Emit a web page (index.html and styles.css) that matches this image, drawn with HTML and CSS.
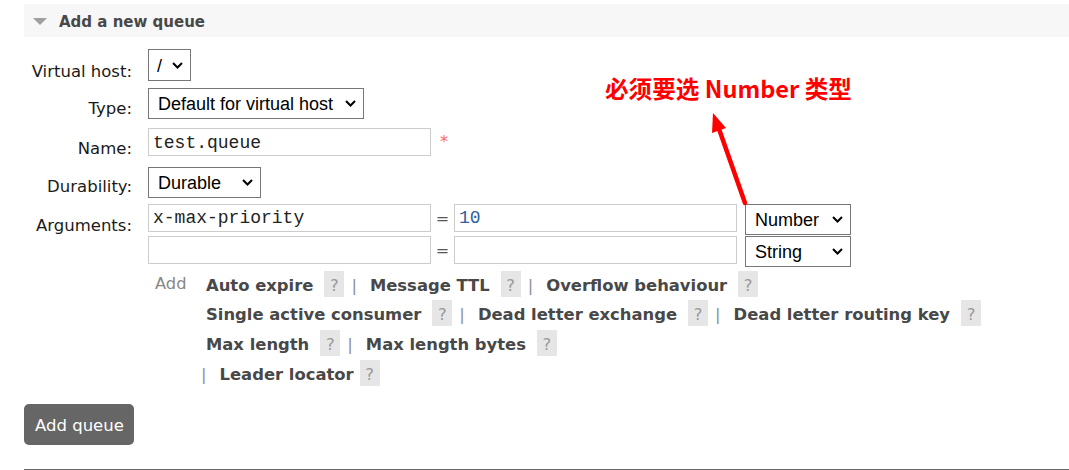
FILE: index.html
```html
<!DOCTYPE html>
<html lang="en">
<head>
<meta charset="utf-8">
<title>Add a new queue</title>
<link rel="stylesheet" href="styles.css">
</head>
<body>
<div class="page">
  <div class="section-head"><span class="tri"></span><h2>Add a new queue</h2></div>
  <form class="form">
    <div class="row r-vhost">
      <label class="lbl lbl-low">Virtual host:</label>
      <select class="sel sel-vhost"><option>/</option></select>
    </div>
    <div class="row r-type">
      <label class="lbl">Type:</label>
      <select class="sel sel-type"><option>Default for virtual host</option></select>
    </div>
    <div class="row r-name">
      <label class="lbl">Name:</label>
      <input class="txt" type="text" value="test.queue"><span class="req">*</span>
    </div>
    <div class="row r-dur">
      <label class="lbl">Durability:</label>
      <select class="sel sel-dur"><option>Durable</option></select>
    </div>
    <div class="row r-args">
      <label class="lbl lbl-low">Arguments:</label>
      <div class="args">
        <div class="arg-line">
          <input class="txt" type="text" value="x-max-priority"><span class="eq">=</span><input class="txt val" type="text" value="10"><select class="sel sel-argtype"><option>Number</option></select>
        </div>
        <div class="arg-line">
          <input class="txt" type="text" value=""><span class="eq">=</span><input class="txt val" type="text" value=""><select class="sel sel-argtype"><option>String</option></select>
        </div>
        <div class="add-area">
          <span class="add-lbl">Add</span>
          <div class="links">
            <div class="lrow"><span class="lk">Auto expire</span><span class="hlp">?</span><span class="sep">|</span><span class="lk">Message TTL</span><span class="hlp">?</span><span class="sep">|</span><span class="lk">Overflow behaviour</span><span class="hlp">?</span></div>
            <div class="lrow"><span class="lk">Single active consumer</span><span class="hlp">?</span><span class="sep">|</span><span class="lk">Dead letter exchange</span><span class="hlp">?</span><span class="sep">|</span><span class="lk">Dead letter routing key</span><span class="hlp">?</span></div>
            <div class="lrow"><span class="lk">Max length</span><span class="hlp">?</span><span class="sep">|</span><span class="lk">Max length bytes</span><span class="hlp">?</span></div>
            <div class="lrow lrow-last"><span class="sep">|</span><span class="lk">Leader locator</span><span class="hlp">?</span></div>
          </div>
        </div>
      </div>
    </div>
    <button type="button" class="btn">Add queue</button>
  </form>
  <hr class="rule">
  <div class="note">必须要选 Number 类型</div>
  <svg class="arrow" width="1069" height="470" viewBox="0 0 1069 470" aria-hidden="true">
    <line x1="745" y1="203" x2="719" y2="129" stroke="#ff0000" stroke-width="4.5" stroke-linecap="round"/>
    <polygon points="713,113 726,128 712,133" fill="#ff0000"/>
  </svg>
</div>
</body>
</html>
```
FILE: styles.css
```css
html, body {
  margin: 0;
  background: #fff;
}
body {
  font-family: "DejaVu Sans", Verdana, sans-serif;
  color: #1a1a1a;
}
.page {
  position: relative;
  box-sizing: border-box;
  width: 1069px;
  height: 470px;
  padding: 4px 0 0 24px;
  overflow: hidden;
}
.section-head {
  display: flex;
  align-items: center;
  height: 33px;
  background: #f7f7f7;
  padding-left: 9px;
}
.tri {
  width: 0;
  height: 0;
  border-left: 7px solid transparent;
  border-right: 7px solid transparent;
  border-top: 7px solid #a0a0a0;
  margin-right: 12px;
  margin-top: 1px;
}
.section-head h2 {
  margin: 0;
  font-size: 15px;
  font-weight: bold;
  color: #484848;
  line-height: 30px;
  padding-top: 3px;
}
.form {
  display: flex;
  flex-direction: column;
  align-items: flex-start;
  margin: 0;
}
.row {
  display: flex;
  align-items: flex-start;
}
.r-vhost { margin-top: 12px; }
.r-type { margin-top: 7px; }
.r-name { margin-top: 9px; }
.r-dur { margin-top: 10px; }
.r-args { margin-top: 6px; }
.lbl {
  width: 108px;
  margin-right: 16px;
  text-align: right;
  font-size: 16.5px;
  line-height: 17px;
  padding-top: 11.5px;
  color: #1a1a1a;
}
.lbl-low { padding-top: 13.5px; }
.sel {
  -webkit-appearance: none;
  appearance: none;
  box-sizing: border-box;
  height: 31px;
  margin: 0;
  border: 1px solid #767676;
  border-radius: 0;
  background: #fff url("data:image/svg+xml;utf8,<svg xmlns='http://www.w3.org/2000/svg' width='11' height='7' viewBox='0 0 11 7'><path d='M1 1l4.5 4.5L10 1' fill='none' stroke='%23000' stroke-width='2'/></svg>") no-repeat right 7px center;
  font: 18px "Liberation Sans", Arial, sans-serif;
  color: #000;
  padding: 1px 20px 0 9px;
}
.sel-vhost { width: 43px; height: 32px; padding-left: 8px; }
.sel-type { width: 216px; }
.sel-dur { width: 113px; }
.sel-argtype { width: 106px; margin-left: 8px; }
.txt {
  box-sizing: border-box;
  width: 283px;
  height: 28px;
  margin: 0;
  border: 1px solid #cccccc;
  border-radius: 0;
  padding: 1px 4px 0;
  font: 18px "Liberation Mono", "Courier New", monospace;
  color: #222;
  background: #fff;
  outline: none;
}
.val { color: #2c5f9e; }
.req {
  margin-left: 9px;
  color: #f66;
  font-size: 16px;
  line-height: 28px;
}
.eq {
  width: 23px;
  text-align: center;
  font-size: 16px;
  line-height: 29px;
  color: #555;
}
.args {
  display: flex;
  flex-direction: column;
  gap: 1px;
}
.arg-line {
  display: flex;
  align-items: flex-start;
}
.add-area {
  display: flex;
  align-items: flex-start;
  margin-top: 3px;
}
.add-lbl {
  box-sizing: border-box;
  width: 58px;
  padding-left: 7px;
  padding-top: 3px;
  color: #888;
  font-size: 16.3px;
  line-height: 20px;
}
.links {
  display: flex;
  flex-direction: column;
  gap: 3.7px;
}
.lrow {
  display: flex;
  align-items: flex-start;
  height: 26px;
  font-size: 16.4px;
  line-height: 30px;
  white-space: nowrap;
}
.lk {
  font-weight: bold;
  color: #484848;
  margin-right: 11px;
}
.hlp {
  width: 20px;
  height: 26px;
  background: #e6e6e6;
  color: #999;
  text-align: center;
  margin-right: 7px;
  overflow: hidden;
}
.sep {
  color: #8a8f9e;
  margin-right: 13px;
}
.lrow-last { margin-left: -5px; }
.lrow-last .lk { margin-right: 6px; }
.btn {
  margin-top: 18px;
  box-sizing: border-box;
  width: 110px;
  height: 41px;
  background: #666;
  color: #fff;
  border: none;
  border-radius: 5px;
  font: 16.5px "DejaVu Sans", Verdana, sans-serif;
  padding: 3px 0 0 11px;
  text-align: left;
}
.rule {
  margin: 24px 0 0 0;
  border: 0;
  border-top: 1px solid #666;
  height: 0;
}
.note {
  position: absolute;
  left: 605px;
  top: 73px;
  font-family: "Noto Sans CJK SC", "Noto Sans", sans-serif;
  font-weight: bold;
  font-size: 23.6px;
  line-height: 30px;
  color: #ff0000;
  white-space: nowrap;
}
.arrow {
  position: absolute;
  left: 0;
  top: 0;
  pointer-events: none;
}
```
